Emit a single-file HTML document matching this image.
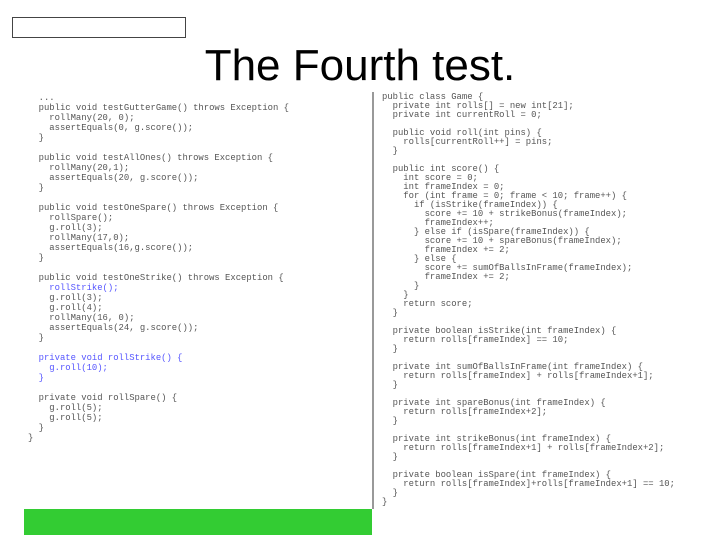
<!DOCTYPE html>
<html><head><meta charset="utf-8"><style>
html,body{margin:0;padding:0;background:#fff;width:720px;height:540px;overflow:hidden;position:relative}
.box{position:absolute;left:12px;top:17px;width:172px;height:19px;border:1px solid #444}
h1{position:absolute;left:0;width:720px;top:40px;margin:0;text-align:center;font:44px "Liberation Sans",sans-serif;color:#000;line-height:52px}
pre{position:absolute;margin:0;font-family:"Liberation Mono",monospace;font-size:8.9px;color:#555}
#l{left:28px;top:93px;line-height:10px}
#r{left:382px;top:93px;line-height:9px}
.b{color:#55f}
.div{position:absolute;left:372px;top:92px;width:2px;height:417px;background:#999}
.g{position:absolute;left:24px;top:509px;width:348px;height:26px;background:#33cc33}
</style></head><body>
<div class="box"></div>
<h1>The Fourth test.</h1>
<pre id="l">  ...
  public void testGutterGame() throws Exception {
    rollMany(20, 0);
    assertEquals(0, g.score());
  }

  public void testAllOnes() throws Exception {
    rollMany(20,1);
    assertEquals(20, g.score());
  }

  public void testOneSpare() throws Exception {
    rollSpare();
    g.roll(3);
    rollMany(17,0);
    assertEquals(16,g.score());
  }

  public void testOneStrike() throws Exception {
<span class="b">    rollStrike();</span>
    g.roll(3);
    g.roll(4);
    rollMany(16, 0);
    assertEquals(24, g.score());
  }

<span class="b">  private void rollStrike() {
    g.roll(10);
  }</span>

  private void rollSpare() {
    g.roll(5);
    g.roll(5);
  }
}</pre>
<div class="div"></div>
<pre id="r">public class Game {
  private int rolls[] = new int[21];
  private int currentRoll = 0;

  public void roll(int pins) {
    rolls[currentRoll++] = pins;
  }

  public int score() {
    int score = 0;
    int frameIndex = 0;
    for (int frame = 0; frame &lt; 10; frame++) {
      if (isStrike(frameIndex)) {
        score += 10 + strikeBonus(frameIndex);
        frameIndex++;
      } else if (isSpare(frameIndex)) {
        score += 10 + spareBonus(frameIndex);
        frameIndex += 2;
      } else {
        score += sumOfBallsInFrame(frameIndex);
        frameIndex += 2;
      }
    }
    return score;
  }

  private boolean isStrike(int frameIndex) {
    return rolls[frameIndex] == 10;
  }

  private int sumOfBallsInFrame(int frameIndex) {
    return rolls[frameIndex] + rolls[frameIndex+1];
  }

  private int spareBonus(int frameIndex) {
    return rolls[frameIndex+2];
  }

  private int strikeBonus(int frameIndex) {
    return rolls[frameIndex+1] + rolls[frameIndex+2];
  }

  private boolean isSpare(int frameIndex) {
    return rolls[frameIndex]+rolls[frameIndex+1] == 10;
  }
}</pre>
<div class="g"></div>
</body></html>
